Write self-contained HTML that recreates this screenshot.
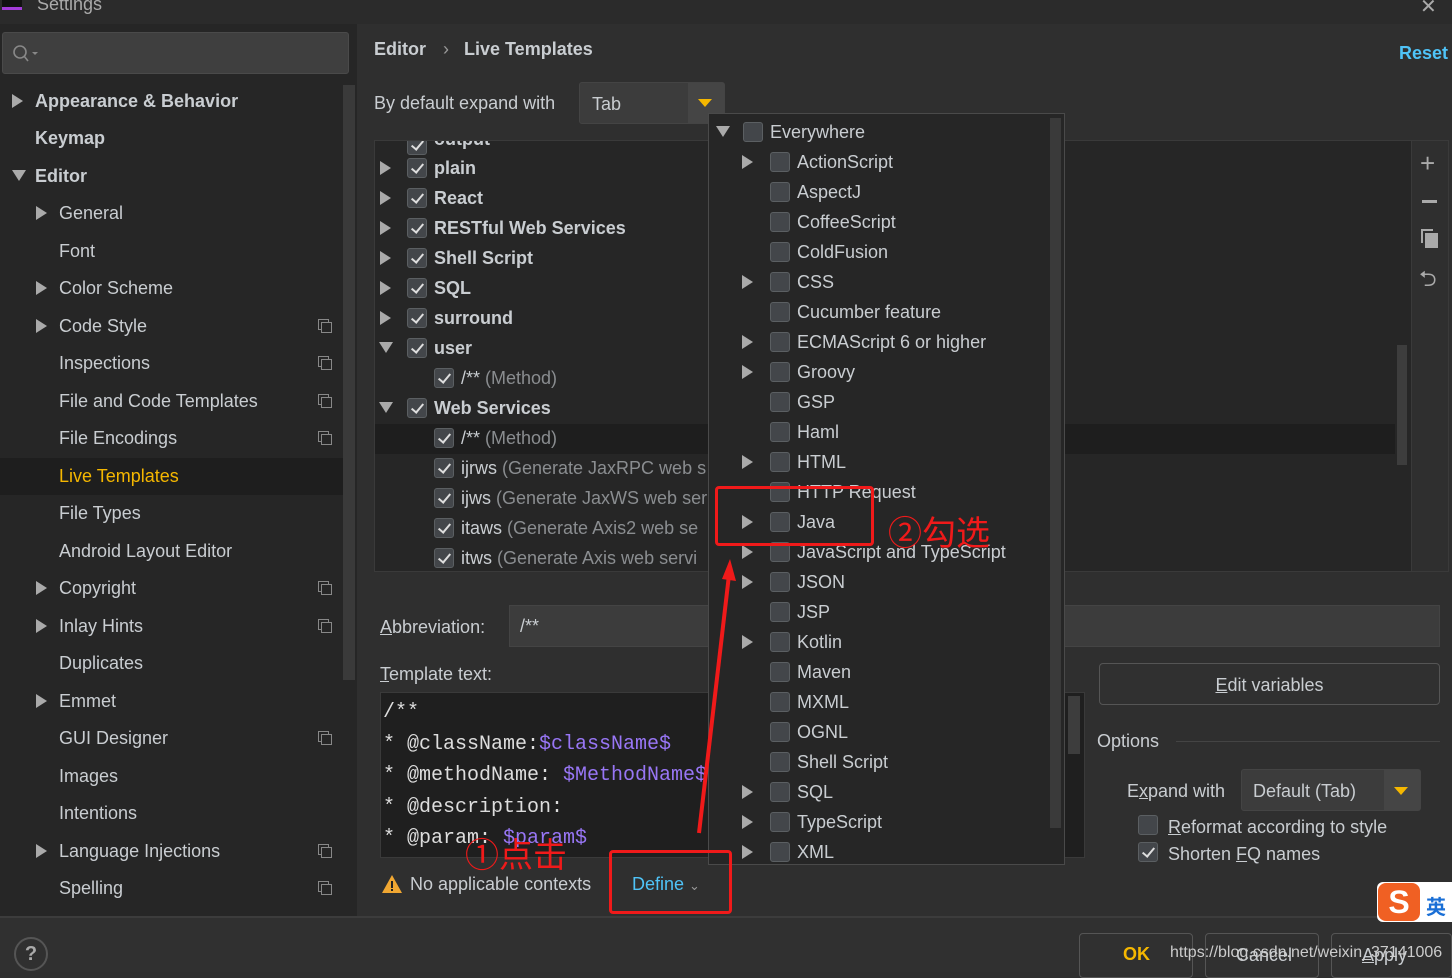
<!DOCTYPE html>
<html><head><meta charset="utf-8"><style>
*{box-sizing:border-box;margin:0;padding:0}
body{width:1452px;height:972px;overflow:hidden;background:#2f2f2f;font-family:"Liberation Sans","Noto Sans CJK SC",sans-serif;color:#c9cdd1;position:relative;font-size:18px}
.a{position:absolute;white-space:nowrap}
.t{position:absolute;white-space:nowrap;margin-top:1px}
.tri{position:absolute;width:0;height:0;border-top:7px solid transparent;border-bottom:7px solid transparent;border-left:11px solid #aaa}
.trd{position:absolute;width:0;height:0;border-left:7px solid transparent;border-right:7px solid transparent;border-top:11px solid #aaa}
.cb{position:absolute;width:20px;height:20px;border:1px solid #5b5f62;background:#43464a;border-radius:3px}
.ck::after{content:"";position:absolute;left:6px;top:2px;width:5px;height:10px;border:solid #ddd;border-width:0 2px 2px 0;transform:rotate(40deg)}
.ic{position:absolute;width:11px;height:11px;border:1.5px solid #888}
.ic::after{content:"";position:absolute;left:2px;top:2px;width:9px;height:9px;border:1.5px solid #888;background:#262626}
.red{position:absolute;border:3px solid #f01a1a;border-radius:4px}
.gray{color:#8a8d90}
</style></head><body>
<!-- title bar -->
<div class="a" style="left:0;top:0;width:1452px;height:24px;background:#2b2b2b"></div>
<div class="a" style="left:2px;top:-6px;width:20px;height:16px;background:#111;border-bottom:3px solid #a33cd9"></div>
<div class="a" style="left:37px;top:-6px;font-size:18px;color:#aaa">Settings</div>
<div class="a" style="left:1420px;top:-6px;font-size:20px;color:#aaa">✕</div>
<!-- sidebar -->
<div class="a" style="left:0;top:24px;width:357px;height:893px;background:#262626"></div>
<div class="a" style="left:2px;top:32px;width:347px;height:42px;background:#3f3f3f;border:1px solid #4a4a4a;border-radius:3px"></div>
<svg class="a" style="left:12px;top:44px" width="28" height="20"><circle cx="8" cy="8" r="6" fill="none" stroke="#888" stroke-width="1.6"/><line x1="12" y1="12" x2="16" y2="17" stroke="#888" stroke-width="1.6"/><path d="M20 8h6l-3 3z" fill="#888"/></svg>
<div class="a" style="left:343px;top:85px;width:12px;height:595px;background:#3a3a3a"></div>
<div class="a" style="left:0;top:458px;width:343px;height:37px;background:#1e1e1e"></div>

<div class="tri" style="left:12px;top:94px"></div><div class="t" style="left:35px;top:90px;font-weight:bold">Appearance &amp; Behavior</div>
<div class="t" style="left:35px;top:127px;font-weight:bold">Keymap</div>
<div class="trd" style="left:12px;top:170px"></div><div class="t" style="left:35px;top:165px;font-weight:bold">Editor</div>
<div class="tri" style="left:36px;top:206px"></div><div class="t" style="left:59px;top:202px">General</div>
<div class="t" style="left:59px;top:240px">Font</div>
<div class="tri" style="left:36px;top:281px"></div><div class="t" style="left:59px;top:277px">Color Scheme</div>
<div class="tri" style="left:36px;top:319px"></div><div class="t" style="left:59px;top:315px">Code Style</div><div class="ic" style="left:318px;top:319px"></div>
<div class="t" style="left:59px;top:352px">Inspections</div><div class="ic" style="left:318px;top:356px"></div>
<div class="t" style="left:59px;top:390px">File and Code Templates</div><div class="ic" style="left:318px;top:394px"></div>
<div class="t" style="left:59px;top:427px">File Encodings</div><div class="ic" style="left:318px;top:431px"></div>
<div class="t" style="left:59px;top:465px;color:#f5b700">Live Templates</div>
<div class="t" style="left:59px;top:502px">File Types</div>
<div class="t" style="left:59px;top:540px">Android Layout Editor</div>
<div class="tri" style="left:36px;top:581px"></div><div class="t" style="left:59px;top:577px">Copyright</div><div class="ic" style="left:318px;top:581px"></div>
<div class="tri" style="left:36px;top:619px"></div><div class="t" style="left:59px;top:615px">Inlay Hints</div><div class="ic" style="left:318px;top:619px"></div>
<div class="t" style="left:59px;top:652px">Duplicates</div>
<div class="tri" style="left:36px;top:694px"></div><div class="t" style="left:59px;top:690px">Emmet</div>
<div class="t" style="left:59px;top:727px">GUI Designer</div><div class="ic" style="left:318px;top:731px"></div>
<div class="t" style="left:59px;top:765px">Images</div>
<div class="t" style="left:59px;top:802px">Intentions</div>
<div class="tri" style="left:36px;top:844px"></div><div class="t" style="left:59px;top:840px">Language Injections</div><div class="ic" style="left:318px;top:844px"></div>
<div class="t" style="left:59px;top:877px">Spelling</div><div class="ic" style="left:318px;top:881px"></div>

<!-- header -->
<div class="t" style="left:374px;top:38px;font-weight:bold">Editor</div>
<div class="t" style="left:443px;top:38px;color:#999">›</div>
<div class="t" style="left:464px;top:38px;font-weight:bold">Live Templates</div>
<div class="t" style="left:1399px;top:42px;font-weight:bold;color:#4fc3f7">Reset</div>
<div class="t" style="left:374px;top:92px">By default expand with</div>
<div class="a" style="left:579px;top:82px;width:146px;height:42px;background:#3c3c3c;border:1px solid #444;border-radius:3px"></div>
<div class="a" style="left:688px;top:83px;width:36px;height:40px;background:#454545"></div>
<div class="a" style="left:698px;top:99px;border-left:7px solid transparent;border-right:7px solid transparent;border-top:8px solid #f5b700"></div>
<div class="t" style="left:592px;top:93px">Tab</div>

<!-- tree -->
<div class="a" style="left:374px;top:140px;width:1038px;height:432px;background:#262626;border:1px solid #3a3a3a;overflow:hidden">
  <div class="cb ck" style="left:32px;top:-6px"></div><div class="t" style="left:59px;top:-13px;font-weight:bold">output</div>
</div>
<div class="a" style="left:1411px;top:140px;width:38px;height:432px;background:#2f2f2f;border:1px solid #3a3a3a"></div>
<div class="a" style="left:1420px;top:148px;font-size:26px;color:#aaa">+</div>
<div class="a" style="left:1422px;top:200px;width:15px;height:3px;background:#aaa"></div>
<div class="a" style="left:1421px;top:229px;width:12px;height:14px;border:2px solid #aaa;border-right:none;border-bottom:none"></div>
<div class="a" style="left:1425px;top:233px;width:13px;height:15px;background:#aaa"></div>
<div class="a" style="left:1419px;top:262px;font-size:22px;color:#aaa">⮌</div>
<div class="a" style="left:1397px;top:345px;width:10px;height:120px;background:#3d3d3d"></div>
<div class="a" style="left:375px;top:424px;width:1020px;height:30px;background:#1e1e1e"></div>

<div class="tri" style="left:380px;top:161px"></div><div class="cb ck" style="left:407px;top:158px"></div><div class="t" style="left:434px;top:157px;font-weight:bold">plain</div>
<div class="tri" style="left:380px;top:191px"></div><div class="cb ck" style="left:407px;top:188px"></div><div class="t" style="left:434px;top:187px;font-weight:bold">React</div>
<div class="tri" style="left:380px;top:221px"></div><div class="cb ck" style="left:407px;top:218px"></div><div class="t" style="left:434px;top:217px;font-weight:bold">RESTful Web Services</div>
<div class="tri" style="left:380px;top:251px"></div><div class="cb ck" style="left:407px;top:248px"></div><div class="t" style="left:434px;top:247px;font-weight:bold">Shell Script</div>
<div class="tri" style="left:380px;top:281px"></div><div class="cb ck" style="left:407px;top:278px"></div><div class="t" style="left:434px;top:277px;font-weight:bold">SQL</div>
<div class="tri" style="left:380px;top:311px"></div><div class="cb ck" style="left:407px;top:308px"></div><div class="t" style="left:434px;top:307px;font-weight:bold">surround</div>
<div class="trd" style="left:379px;top:342px"></div><div class="cb ck" style="left:407px;top:338px"></div><div class="t" style="left:434px;top:337px;font-weight:bold">user</div>
<div class="cb ck" style="left:434px;top:368px"></div><div class="t" style="left:461px;top:367px">/** <span class="gray">(Method)</span></div>
<div class="trd" style="left:379px;top:402px"></div><div class="cb ck" style="left:407px;top:398px"></div><div class="t" style="left:434px;top:397px;font-weight:bold">Web Services</div>
<div class="cb ck" style="left:434px;top:428px"></div><div class="t" style="left:461px;top:427px">/** <span class="gray">(Method)</span></div>
<div class="cb ck" style="left:434px;top:458px"></div><div class="t" style="left:461px;top:457px">ijrws <span class="gray">(Generate JaxRPC web s</span></div>
<div class="cb ck" style="left:434px;top:488px"></div><div class="t" style="left:461px;top:487px">ijws <span class="gray">(Generate JaxWS web ser</span></div>
<div class="cb ck" style="left:434px;top:518px"></div><div class="t" style="left:461px;top:517px">itaws <span class="gray">(Generate Axis2 web se</span></div>
<div class="cb ck" style="left:434px;top:548px"></div><div class="t" style="left:461px;top:547px">itws <span class="gray">(Generate Axis web servi</span></div>

<!-- abbreviation -->
<div class="t" style="left:380px;top:616px"><u>A</u>bbreviation:</div>
<div class="a" style="left:509px;top:605px;width:931px;height:42px;background:#3c3c3c;border:1px solid #444"></div>
<div class="t" style="left:520px;top:615px">/**</div>
<div class="t" style="left:380px;top:663px"><u>T</u>emplate text:</div>
<div class="a" style="left:380px;top:692px;width:705px;height:166px;background:#1f1f1f;border:1px solid #3a3a3a;overflow:hidden">
<div class="a" style="left:2px;top:4px;font-family:'Liberation Mono','DejaVu Sans Mono',monospace;font-size:20px;line-height:31.5px;color:#ddd">/**<br>* @className:<span style="color:#9876f5">$className$</span><br>* @methodName: <span style="color:#9876f5">$MethodName$</span><br>* @description:<br>* @param: <span style="color:#9876f5">$param$</span></div>
</div>
<div class="a" style="left:1068px;top:696px;width:12px;height:58px;background:#3d3d3d"></div>

<div class="a" style="left:1099px;top:663px;width:341px;height:42px;border:1px solid #555;border-radius:4px;background:#303030;text-align:center;line-height:42px"><u>E</u>dit variables</div>
<div class="t" style="left:1097px;top:730px">Options</div>
<div class="a" style="left:1176px;top:741px;width:264px;height:1px;background:#444"></div>
<div class="t" style="left:1127px;top:780px">E<u>x</u>pand with</div>
<div class="a" style="left:1241px;top:769px;width:180px;height:42px;background:#3c3c3c;border:1px solid #444;border-radius:3px"></div>
<div class="a" style="left:1384px;top:770px;width:36px;height:40px;background:#454545"></div>
<div class="a" style="left:1394px;top:787px;border-left:7px solid transparent;border-right:7px solid transparent;border-top:8px solid #f5b700"></div>
<div class="t" style="left:1253px;top:780px">Default (Tab)</div>
<div class="cb" style="left:1138px;top:815px"></div><div class="t" style="left:1168px;top:816px"><u>R</u>eformat according to style</div>
<div class="cb ck" style="left:1138px;top:842px"></div><div class="t" style="left:1168px;top:843px">Shorten <u>F</u>Q names</div>

<svg class="a" style="left:381px;top:874px" width="22" height="20"><path d="M11 1L21 19H1z" fill="#f0a732"/><rect x="10" y="7" width="2" height="7" fill="#222"/><rect x="10" y="15" width="2" height="2" fill="#222"/></svg>
<div class="t" style="left:410px;top:873px">No applicable contexts</div>
<div class="t" style="left:632px;top:873px;color:#4fc3f7">Define <span style="color:#999;font-size:13px">⌄</span></div>

<!-- bottom bar -->
<div class="a" style="left:0;top:916px;width:1452px;height:56px;background:#303030;border-top:2px solid #3c3c3c"></div>
<div class="a" style="left:14px;top:937px;width:34px;height:34px;border:2px solid #555;border-radius:50%;text-align:center;line-height:30px;font-weight:bold;font-size:20px;color:#aaa">?</div>
<div class="a" style="left:1079px;top:933px;width:114px;height:45px;border:1px solid #555;border-radius:4px"></div>
<div class="a" style="left:1205px;top:933px;width:114px;height:45px;border:1px solid #555;border-radius:4px"></div>
<div class="a" style="left:1331px;top:933px;width:121px;height:45px;border:1px solid #555;border-radius:4px"></div>
<div class="t" style="left:1123px;top:943px;font-weight:bold;color:#f5b700">OK</div>
<div class="t" style="left:1236px;top:944px">Cancel</div>
<div class="t" style="left:1362px;top:944px"><u>A</u>pply</div>
<div class="t" style="left:1170px;top:943px;font-size:16px;color:#ccc">https://blog.csdn.net/weixin_37141006</div>
<div class="a" style="left:1377px;top:882px;width:75px;height:40px;background:#fff;border-radius:6px 0 0 6px"></div>
<div class="a" style="left:1378px;top:883px;width:42px;height:38px;background:#f06023;border-radius:8px;color:#fff;font-weight:bold;font-size:32px;text-align:center;line-height:38px">S</div>
<div class="a" style="left:1426px;top:891px;color:#1a6fd6;font-weight:bold;font-size:20px">英</div>

<!-- popup -->
<div class="a" style="left:708px;top:113px;width:357px;height:752px;background:#262626;border:1px solid #4a4a4a"></div>
<div class="a" style="left:1050px;top:118px;width:11px;height:710px;background:#3a3a3a"></div>
<div class="trd" style="left:716px;top:126px"></div><div class="cb" style="left:743px;top:122px"></div><div class="t" style="left:770px;top:121px">Everywhere</div>
<div class="tri" style="left:742px;top:155px"></div><div class="cb" style="left:770px;top:152px"></div><div class="t" style="left:797px;top:151px">ActionScript</div>
<div class="cb" style="left:770px;top:182px"></div><div class="t" style="left:797px;top:181px">AspectJ</div>
<div class="cb" style="left:770px;top:212px"></div><div class="t" style="left:797px;top:211px">CoffeeScript</div>
<div class="cb" style="left:770px;top:242px"></div><div class="t" style="left:797px;top:241px">ColdFusion</div>
<div class="tri" style="left:742px;top:275px"></div><div class="cb" style="left:770px;top:272px"></div><div class="t" style="left:797px;top:271px">CSS</div>
<div class="cb" style="left:770px;top:302px"></div><div class="t" style="left:797px;top:301px">Cucumber feature</div>
<div class="tri" style="left:742px;top:335px"></div><div class="cb" style="left:770px;top:332px"></div><div class="t" style="left:797px;top:331px">ECMAScript 6 or higher</div>
<div class="tri" style="left:742px;top:365px"></div><div class="cb" style="left:770px;top:362px"></div><div class="t" style="left:797px;top:361px">Groovy</div>
<div class="cb" style="left:770px;top:392px"></div><div class="t" style="left:797px;top:391px">GSP</div>
<div class="cb" style="left:770px;top:422px"></div><div class="t" style="left:797px;top:421px">Haml</div>
<div class="tri" style="left:742px;top:455px"></div><div class="cb" style="left:770px;top:452px"></div><div class="t" style="left:797px;top:451px">HTML</div>
<div class="cb" style="left:770px;top:482px"></div><div class="t" style="left:797px;top:481px">HTTP Request</div>
<div class="tri" style="left:742px;top:515px"></div><div class="cb" style="left:770px;top:512px"></div><div class="t" style="left:797px;top:511px">Java</div>
<div class="tri" style="left:742px;top:545px"></div><div class="cb" style="left:770px;top:542px"></div><div class="t" style="left:797px;top:541px">JavaScript and TypeScript</div>
<div class="tri" style="left:742px;top:575px"></div><div class="cb" style="left:770px;top:572px"></div><div class="t" style="left:797px;top:571px">JSON</div>
<div class="cb" style="left:770px;top:602px"></div><div class="t" style="left:797px;top:601px">JSP</div>
<div class="tri" style="left:742px;top:635px"></div><div class="cb" style="left:770px;top:632px"></div><div class="t" style="left:797px;top:631px">Kotlin</div>
<div class="cb" style="left:770px;top:662px"></div><div class="t" style="left:797px;top:661px">Maven</div>
<div class="cb" style="left:770px;top:692px"></div><div class="t" style="left:797px;top:691px">MXML</div>
<div class="cb" style="left:770px;top:722px"></div><div class="t" style="left:797px;top:721px">OGNL</div>
<div class="cb" style="left:770px;top:752px"></div><div class="t" style="left:797px;top:751px">Shell Script</div>
<div class="tri" style="left:742px;top:785px"></div><div class="cb" style="left:770px;top:782px"></div><div class="t" style="left:797px;top:781px">SQL</div>
<div class="tri" style="left:742px;top:815px"></div><div class="cb" style="left:770px;top:812px"></div><div class="t" style="left:797px;top:811px">TypeScript</div>
<div class="tri" style="left:742px;top:845px"></div><div class="cb" style="left:770px;top:842px"></div><div class="t" style="left:797px;top:841px">XML</div>

<!-- annotations -->
<div class="red" style="left:715px;top:486px;width:159px;height:60px"></div>
<div class="red" style="left:609px;top:850px;width:123px;height:64px"></div>
<div class="a" style="left:888px;top:506px;font-size:34px;color:#f01a1a">②勾选</div>
<div class="a" style="left:465px;top:828px;font-size:34px;color:#f01a1a">①点击</div>
<svg class="a" style="left:690px;top:555px" width="50" height="285"><line x1="9" y1="278" x2="39" y2="20" stroke="#f01a1a" stroke-width="4"/><path d="M40 4L46 26L32 24z" fill="#f01a1a"/></svg>
</body></html>
